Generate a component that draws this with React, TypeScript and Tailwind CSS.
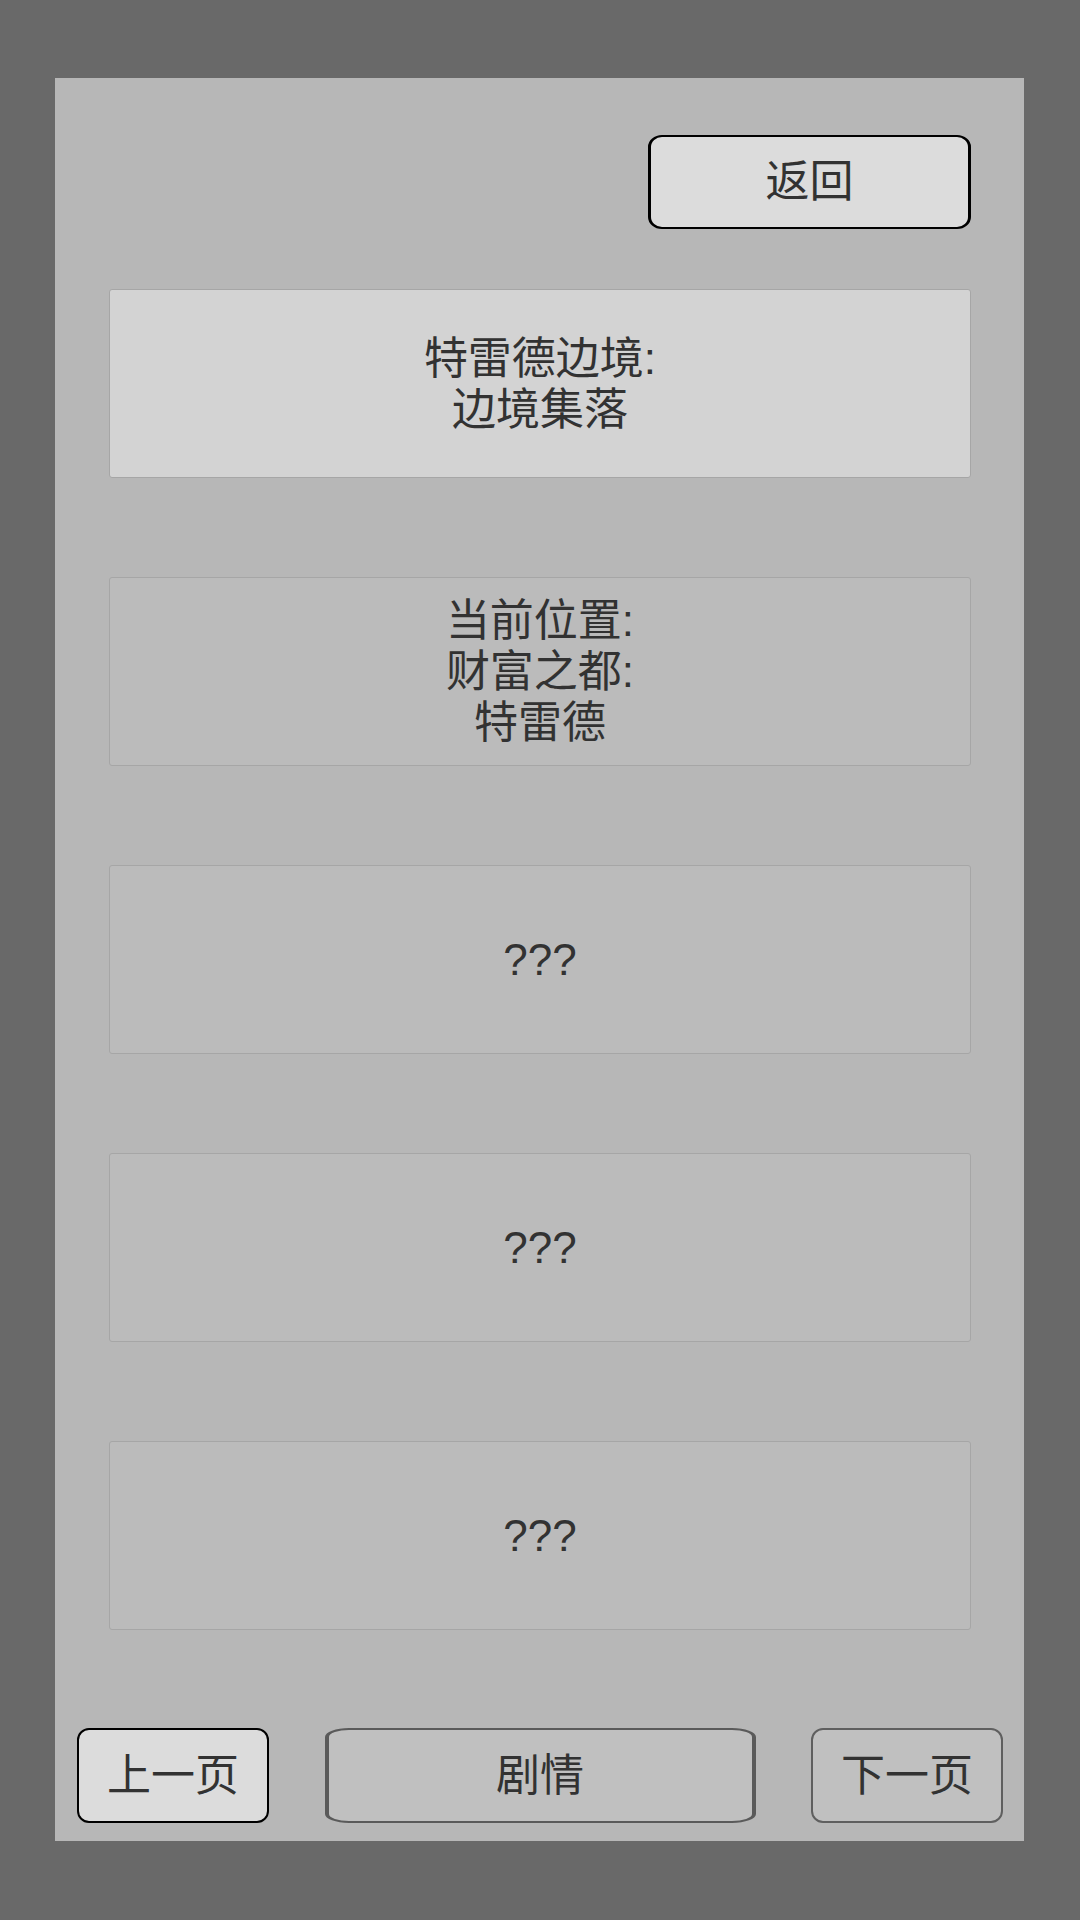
import React from "react";

const font = { fontFamily: '"Liberation Sans", "Noto Sans CJK SC", sans-serif' };

function Card({ lines, light }: { lines: string[]; light?: boolean }) {
  return (
    <div
      className={`h-[189px] w-full rounded-[3px] border flex flex-col items-center justify-center text-[44px] leading-[51px] text-[#323232] ${
        light ? "bg-[#d3d3d3] border-[#a6a6a6]" : "bg-[#bbbbbb] border-[#a6a6a6]"
      }`}
    >
      {lines.map((l, i) => (
        <div key={i}>{l}</div>
      ))}
    </div>
  );
}

export default function App() {
  return (
    <div className="w-[1080px] h-[1920px] bg-[#696969] pt-[78px] pl-[55px]" style={font}>
      <div className="w-[969px] h-[1763px] bg-[#b7b7b7] flex flex-col">
        <div className="flex justify-end pt-[57px] pr-[53px]">
          <div className="w-[323px] h-[94px] bg-[#dcdcdc] border-y-2 border-x-[3px] border-black rounded-[14px/12px] flex items-center justify-center text-[44px] text-[#323232]">
            返回
          </div>
        </div>
        <div className="flex flex-col gap-[99px] mt-[60px] pl-[54px] pr-[53px]">
          <Card light lines={["特雷德边境:", "边境集落"]} />
          <Card lines={["当前位置:", "财富之都:", "特雷德"]} />
          <Card lines={["???"]} />
          <Card lines={["???"]} />
          <Card lines={["???"]} />
        </div>
        <div className="flex justify-between items-center mt-[98px] pl-[22px] pr-[21px]">
          <div className="w-[192px] h-[95px] bg-[#dcdcdc] border-2 border-black rounded-[12px] flex items-center justify-center text-[44px] text-[#323232]">
            上一页
          </div>
          <div className="w-[431px] h-[95px] bg-[#c0c0c0] border-y-2 border-x-[4px] border-[#5a5a5a] rounded-[24px/9px] flex items-center justify-center text-[44px] text-[#323232]">
            剧情
          </div>
          <div className="w-[192px] h-[95px] bg-[#c0c0c0] border-2 border-[#5f5f5f] rounded-[12px] flex items-center justify-center text-[44px] text-[#323232]">
            下一页
          </div>
        </div>
      </div>
    </div>
  );
}
